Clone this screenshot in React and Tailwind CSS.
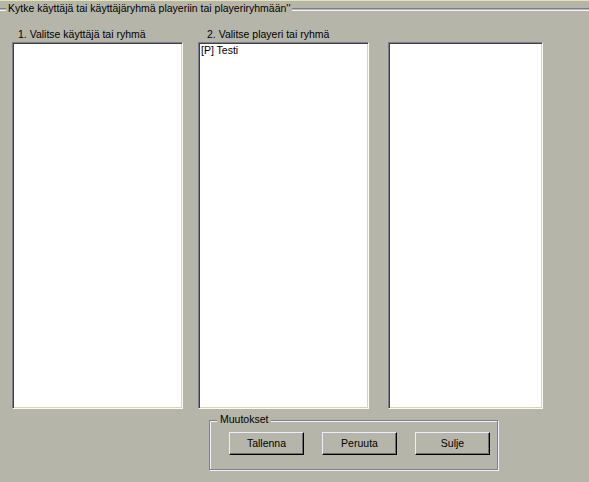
const font = { fontFamily: '"Liberation Sans", Arial, sans-serif' };

function ListBox({ width, children }) {
  return (
    <div
      className={`${width} h-[367px] bg-white border border-t-[#7c7c8c] border-l-[#7c7c8c] border-r-[#fcfcf0] border-b-[#fcfcf0] shadow-[inset_1px_1px_0_#404048,inset_-1px_-1px_0_#d6d6b4] px-[2px] py-[1px] text-[10.5px] leading-[13px] text-black`}
    >
      {children}
    </div>
  );
}

function WinButton({ label }) {
  return (
    <button className="w-[75px] h-[23px] bg-[#b6b5aa] border border-t-[#ececff] border-l-[#ececff] border-r-black border-b-black shadow-[inset_-1px_-1px_0_#6e6e6e] text-[10.5px] text-black leading-none">
      {label}
    </button>
  );
}

export default function App() {
  return (
    <div className="w-[589px] h-[482px] bg-[#b6b5aa] text-black overflow-hidden" style={font}>
      <div className="h-[1px] bg-[#e6e2b2]" />
      {/* main group title */}
      <div className="flex items-center h-[13px] mt-[1px]">
        <div className="w-[6px] h-[2px] border-t border-[#808088] shadow-[0_1px_0_#f4f4ff]" />
        <span className="px-[2px] text-[10.5px] leading-[13px] whitespace-nowrap">
          Kytke käyttäjä tai käyttäjäryhmä playeriin tai playeriryhmään''
        </span>
        <div className="flex-1 h-[2px] border-t border-[#808088] shadow-[0_1px_0_#f4f4ff]" />
      </div>

      <div className="flex mt-[13px] pl-[12px]">
        <div className="flex flex-col">
          <div className="pl-[6px] h-[14px] text-[10.5px] leading-[13px]">1. Valitse käyttäjä tai ryhmä</div>
          <ListBox width="w-[171px]" />
        </div>
        <div className="flex flex-col ml-[15px]">
          <div className="pl-[9px] h-[14px] text-[10.5px] leading-[13px]">2. Valitse playeri tai ryhmä</div>
          <ListBox width="w-[171px]">[P] Testi</ListBox>
        </div>
        <div className="flex flex-col ml-[19px]">
          <div className="h-[14px]" />
          <ListBox width="w-[155px]" />
        </div>
      </div>

      {/* Muutokset group */}
      <div className="ml-[209px] mt-[11px] w-[289px] h-[50px] relative border border-[#808088] shadow-[1px_1px_0_#f0f0ff,inset_1px_1px_0_#f0f0ff]">
        <span className="absolute -top-[8px] left-[7px] px-[3px] bg-[#b6b5aa] text-[10.5px] leading-[13px]">
          Muutokset
        </span>
        <div className="flex gap-[18px] pl-[19px] pt-[11px]">
          <WinButton label="Tallenna" />
          <WinButton label="Peruuta" />
          <WinButton label="Sulje" />
        </div>
      </div>
    </div>
  );
}
